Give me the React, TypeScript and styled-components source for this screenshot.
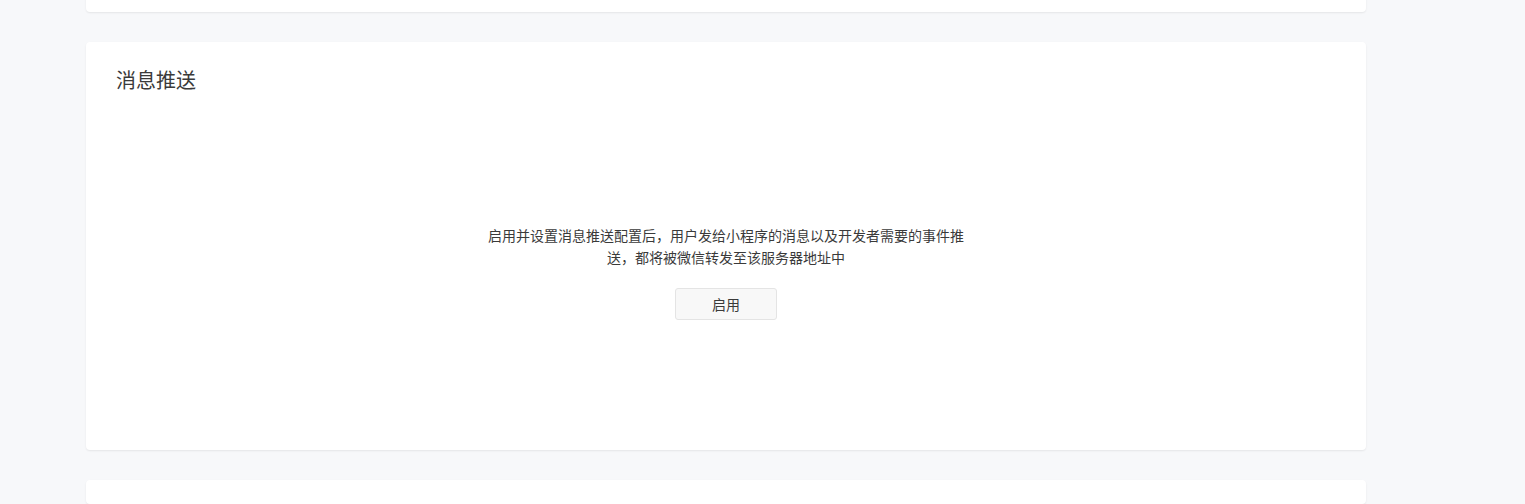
import React from "react";
import styled, { createGlobalStyle } from "styled-components";

const GlobalStyle = createGlobalStyle`
  html, body {
    margin: 0;
    padding: 0;
    background: #f7f8fa;
    overflow: hidden;
  }
  body {
    font-family: "Noto Sans CJK SC", "Liberation Sans", sans-serif;
    color: #353535;
  }
`;

const PageContainer = styled.div`
  display: flex;
  flex-direction: column;
  gap: 30px;
  width: 1280px;
  margin: -108px 0 0 86px;
`;

const Card = styled.section<{ $height: number }>`
  box-sizing: border-box;
  display: flex;
  flex-direction: column;
  height: ${(p) => p.$height}px;
  padding: 24px 30px 0;
  background: #fff;
  border-radius: 4px;
  box-shadow: 0 1px 2px rgba(0, 0, 0, 0.08);
`;

const CardTitle = styled.h3`
  margin: 0;
  font-size: 20px;
  font-weight: 400;
  line-height: 28px;
  color: #3a3a3a;
`;

const EmptyBody = styled.div`
  flex: 1;
  display: flex;
  flex-direction: column;
  align-items: center;
  justify-content: center;
`;

const Description = styled.p`
  width: 480px;
  margin: 0;
  font-size: 14px;
  line-height: 22px;
  text-align: center;
  color: #3a3a3a;
`;

const EnableButton = styled.button`
  box-sizing: border-box;
  width: 102px;
  height: 32px;
  margin-top: 20px;
  border: 1px solid #e4e4e4;
  border-radius: 3px;
  background: #f8f8f8;
  font-family: "Noto Sans CJK SC", "Liberation Sans", sans-serif;
  font-size: 14px;
  color: #3a3a3a;
  cursor: pointer;
`;

const App: React.FC = () => {
  return (
    <>
      <GlobalStyle />
      <PageContainer>
        <Card $height={120} />
        <Card $height={408}>
          <CardTitle>消息推送</CardTitle>
          <EmptyBody>
            <Description>
              启用并设置消息推送配置后，用户发给小程序的消息以及开发者需要的事件推送，都将被微信转发至该服务器地址中
            </Description>
            <EnableButton>启用</EnableButton>
          </EmptyBody>
        </Card>
        <Card $height={24} />
      </PageContainer>
    </>
  );
};

export default App;
